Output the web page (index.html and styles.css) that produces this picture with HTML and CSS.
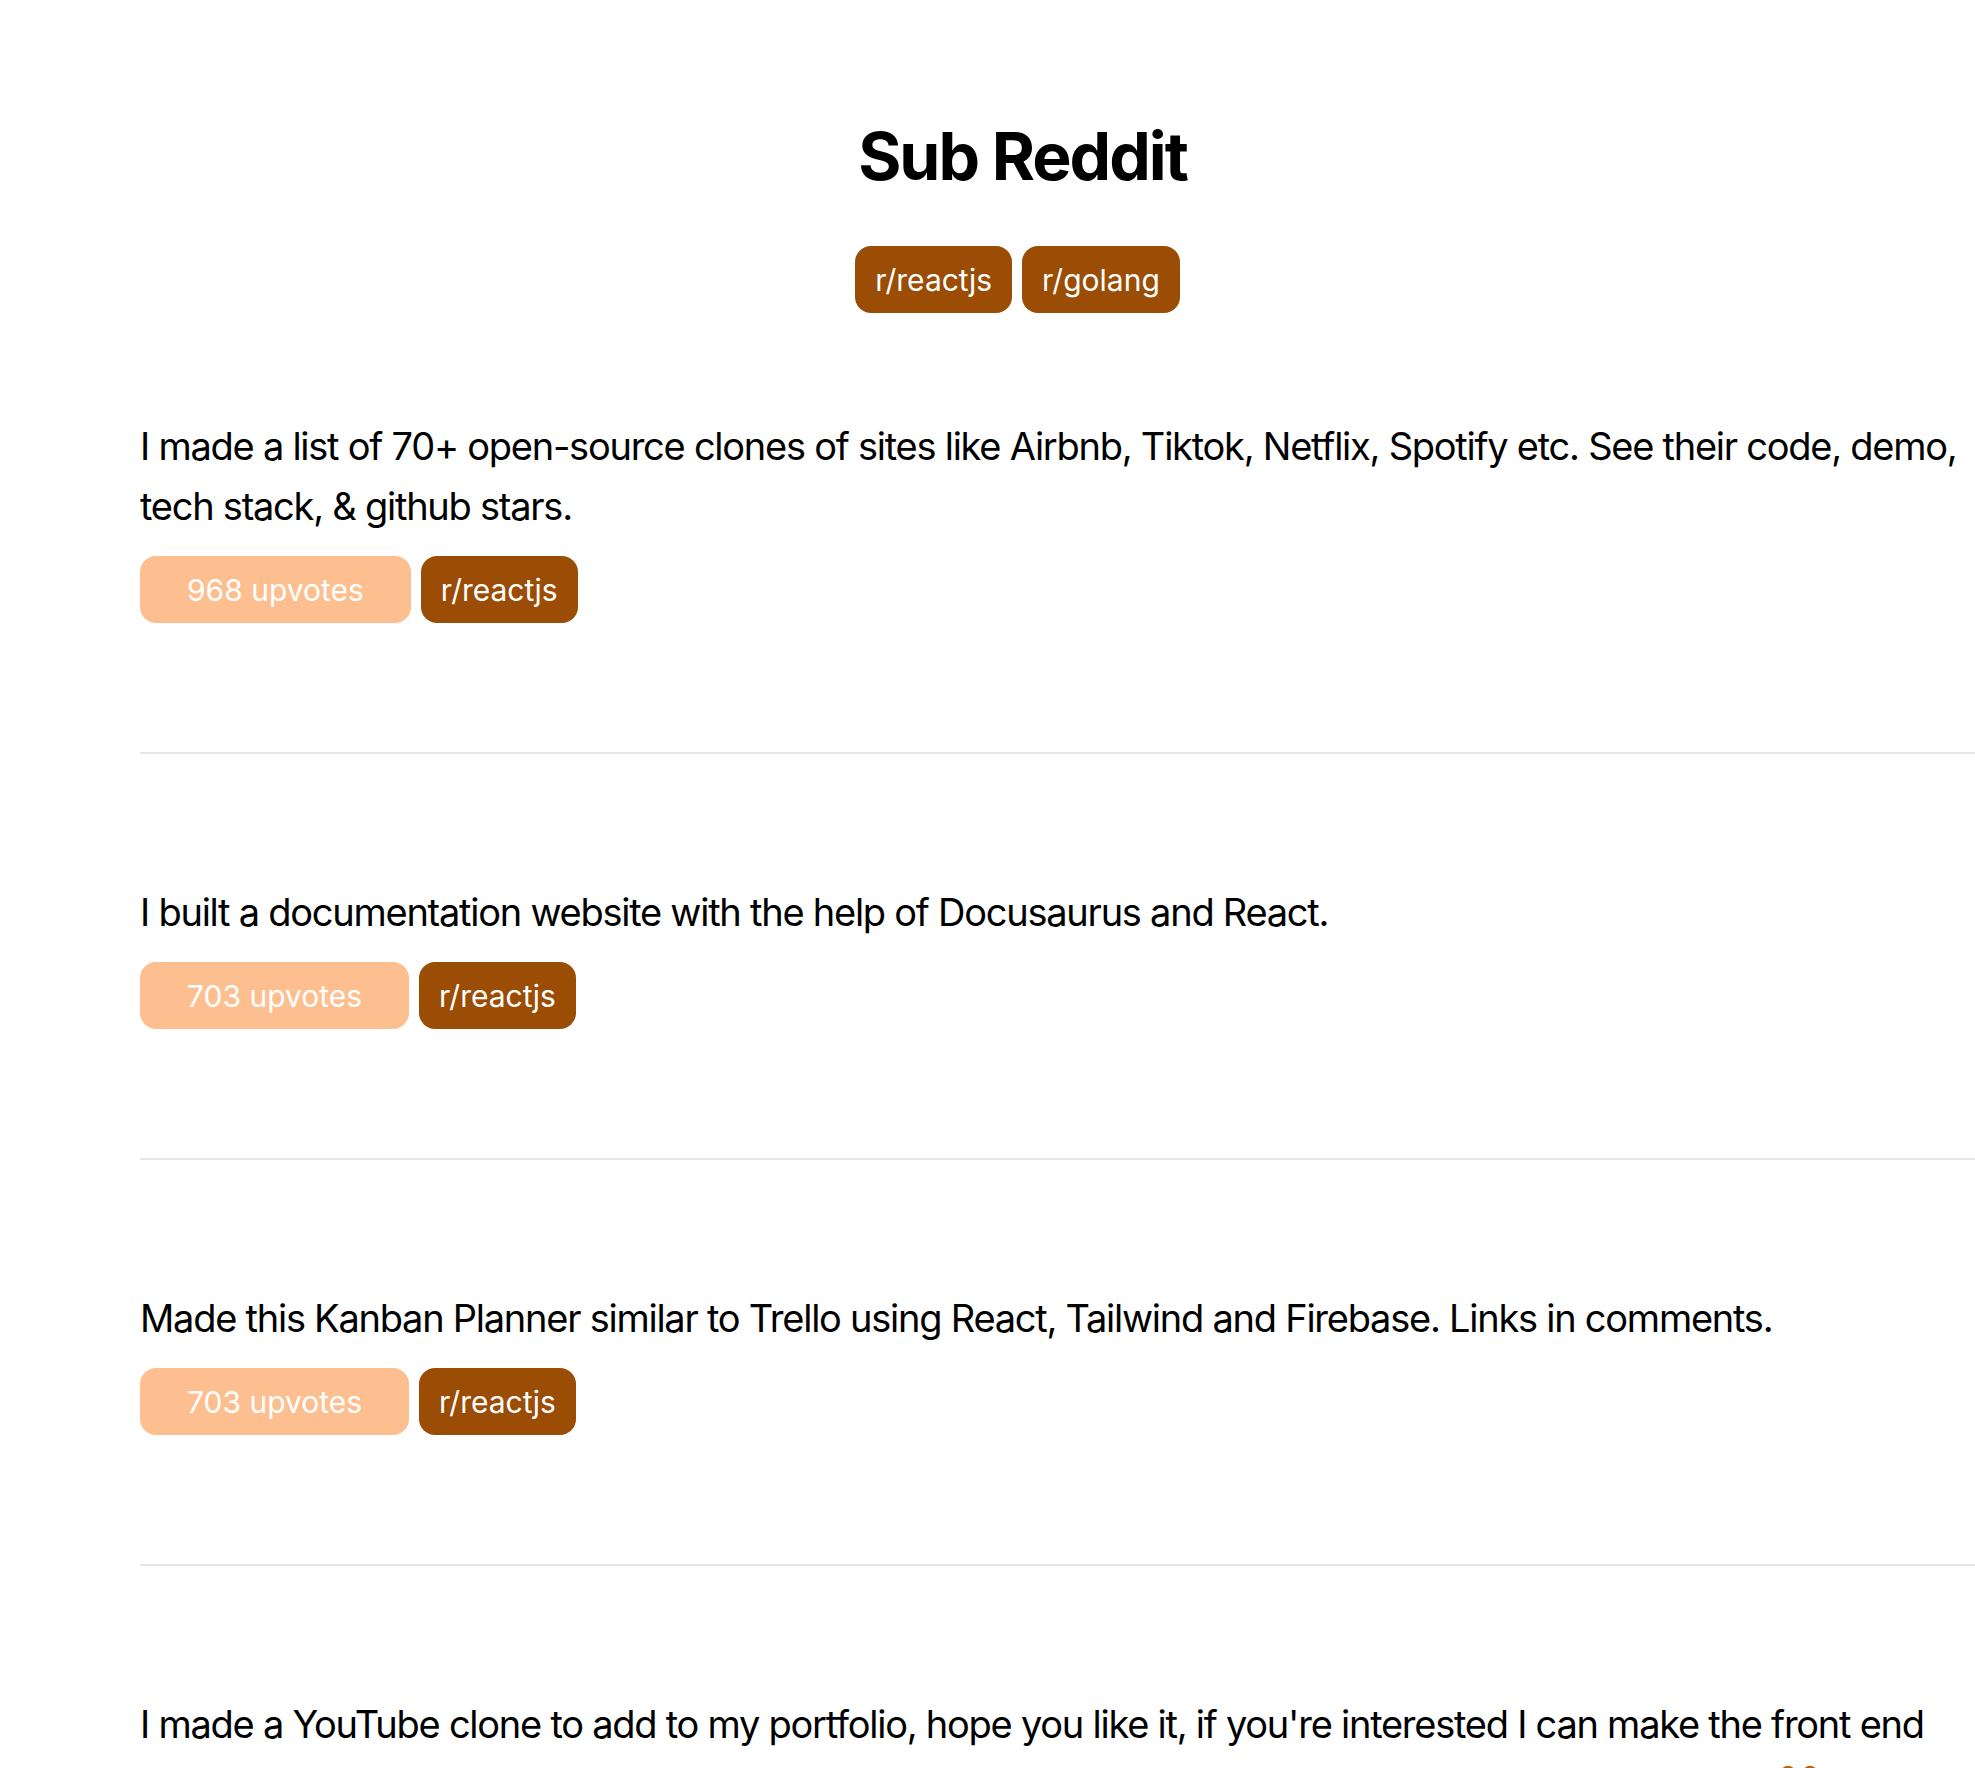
FILE: index.html
```html
<!DOCTYPE html>
<html lang="en">
<head>
<meta charset="utf-8">
<title>Sub Reddit</title>
<link rel="stylesheet" href="styles.css">
</head>
<body>
<main class="page">
  <header class="header">
    <h1 class="title">Sub Reddit</h1>
    <div class="subs">
      <span class="pill pill-dark">r/reactjs</span>
      <span class="pill pill-dark">r/golang</span>
    </div>
  </header>
  <section class="posts">
    <article class="post">
      <p class="post-text">I made a list of 70+ open-source clones of sites like Airbnb, Tiktok, Netflix, Spotify etc. See their code, demo, tech stack, &amp; github stars.</p>
      <div class="meta">
        <span class="pill pill-light">968 upvotes</span>
        <span class="pill pill-dark">r/reactjs</span>
      </div>
    </article>
    <article class="post">
      <p class="post-text">I built a documentation website with the help of Docusaurus and React.</p>
      <div class="meta">
        <span class="pill pill-light">703 upvotes</span>
        <span class="pill pill-dark">r/reactjs</span>
      </div>
    </article>
    <article class="post">
      <p class="post-text">Made this Kanban Planner similar to Trello using React, Tailwind and Firebase. Links in comments.</p>
      <div class="meta">
        <span class="pill pill-light">703 upvotes</span>
        <span class="pill pill-dark">r/reactjs</span>
      </div>
    </article>
    <article class="post">
      <p class="post-text">I made a YouTube clone to add to my portfolio, hope you like it, if you're interested I can make the front end and back end code open source on github, just let me know what you want in the comments here <svg class="emoji" viewBox="0 0 40 40" width="40" height="40" aria-hidden="true"><circle cx="20" cy="24" r="15" fill="#f2b36b" stroke="#b8621a" stroke-width="2"/><circle cx="9" cy="9" r="6" fill="#ffffff" stroke="#b8621a" stroke-width="2.5"/><circle cx="31" cy="9" r="6" fill="#ffffff" stroke="#b8621a" stroke-width="2.5"/></svg></p>
      <div class="meta">
        <span class="pill pill-light">612 upvotes</span>
        <span class="pill pill-dark">r/reactjs</span>
      </div>
    </article>
  </section>
</main>
</body>
</html>
```

FILE: styles.css
```css
html, body {
  margin: 0;
  padding: 0;
  background: #ffffff;
}

body {
  font-family: "Inter", "Liberation Sans", sans-serif;
  color: #000000;
  overflow-x: hidden;
}

.page {
  padding-left: 140px;
}

.header {
  padding-right: 70px;
  padding-top: 116px;
  display: flex;
  flex-direction: column;
  align-items: center;
}

.title {
  margin: 0;
  font-size: 66px;
  line-height: 80px;
  font-weight: 700;
  letter-spacing: -2px;
}

.subs {
  margin-top: 50px;
  display: flex;
  justify-content: center;
}

.subs .pill {
  margin-right: 10px;
}

.pill {
  display: inline-flex;
  align-items: center;
  justify-content: center;
  height: 67px;
  box-sizing: border-box;
  padding: 0 20px;
  border-radius: 16px;
  font-size: 30px;
  color: #ffffff;
  white-space: nowrap;
}

.pill-dark {
  background: #9b4c05;
}

.pill-light {
  background: #fdbf8f;
  padding: 0 47px;
}

.post {
  padding: 128px 15px 129px 0;
  border-bottom: 2px solid #e6e6e6;
}

.post:first-child {
  padding-top: 103px;
}

.post-text {
  margin: 0;
  font-size: 38px;
  line-height: 60px;
  font-weight: 400;
  letter-spacing: -1.25px;
}

.emoji {
  vertical-align: -6px;
}

.meta {
  margin-top: 20px;
  display: flex;
  gap: 10px;
}
```
